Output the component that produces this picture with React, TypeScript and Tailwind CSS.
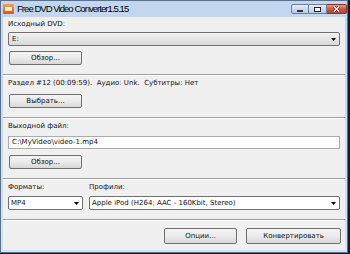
import React from "react";

const font = { fontFamily: "Tahoma, 'DejaVu Sans', 'Liberation Sans', sans-serif" };

function Btn({ children, className = "" }: { children: React.ReactNode; className?: string }) {
  return (
    <div
      className={
        "flex items-center justify-center rounded-[2px] border border-[#707070] bg-gradient-to-b from-[#f4f4f4] via-[#ebebeb] to-[#d8d8d8] text-[7px] text-[#111] " +
        className
      }
    >
      {children}
    </div>
  );
}

function Arrow() {
  return (
    <svg width="5" height="3" viewBox="0 0 5 3" className="shrink-0">
      <path d="M0 0H5L2.5 3Z" fill="#000" />
    </svg>
  );
}

function Sep() {
  return (
    <div className="w-full">
      <div className="h-px bg-[#a0a0a0]" />
      <div className="h-px bg-white" />
    </div>
  );
}

export default function App() {
  return (
    <div className="relative h-[254px] w-[350px] overflow-hidden bg-[#0f1b33]" style={font}>
      <div className="absolute left-0 top-0 flex h-[253px] w-[348px] flex-col border border-[#5b6f8f] bg-gradient-to-b from-[#c2d6ef] to-[#d3e2f5]">
        {/* title bar */}
        <div className="flex h-[16px] shrink-0 items-center pl-[2px]">
          <div className="flex h-[10px] w-[11px] items-center justify-center rounded-[1px] bg-gradient-to-b from-[#f6a34a] to-[#d8520f]">
            <div className="h-[4px] w-[7px] rounded-[1px] bg-[#fff1d0]" />
          </div>
          <div
            className="ml-[3px] text-[9.5px] leading-none tracking-[-0.95px] text-black"
            style={{ fontFamily: "'Liberation Sans', Arial, sans-serif" }}
          >
            Free DVD Video Converter1.5.15
          </div>
          <div className="ml-auto flex items-start self-start pt-[3px]">
            <div className="flex h-[10px] w-[18px] items-end justify-center rounded-l-[2px] border border-[#6b7f9c] bg-gradient-to-b from-[#e6eef9] to-[#b4c9e5] pb-[1px]">
              <div className="h-[2px] w-[6px] border border-[#333] bg-white" />
            </div>
            <div className="flex h-[10px] w-[18px] items-center justify-center border-y border-r border-[#6b7f9c] bg-gradient-to-b from-[#e6eef9] to-[#b4c9e5]">
              <div className="h-[5px] w-[7px] border-[1.5px] border-[#222] bg-white" />
            </div>
            <div className="flex h-[10px] w-[20px] items-center justify-center rounded-r-[2px] border-y border-r border-[#7a3a30] bg-gradient-to-b from-[#e8998a] via-[#d0543f] to-[#c0402c]">
              <svg width="7" height="6" viewBox="0 0 7 6">
                <path d="M1 0.5L6 5.5M6 0.5L1 5.5" stroke="#5a1a10" strokeWidth="2.4" />
                <path d="M1 0.5L6 5.5M6 0.5L1 5.5" stroke="#fff" strokeWidth="1.3" />
              </svg>
            </div>
          </div>
        </div>
        {/* client area */}
        <div className="mx-[2px] mb-[2px] flex flex-1 flex-col bg-[#f0f0f0] text-[7px] leading-none text-[#111]">
          <div className="flex flex-col px-[5px] pt-[4px]">
            <div className="h-[8px]">Исходный DVD:</div>
            <div className="mt-[3px] flex h-[14px] items-center justify-between rounded-[2px] border border-[#707070] bg-gradient-to-b from-[#f2f2f2] to-[#d8d8d8] pl-[3px] pr-[3px]">
              <span>E:</span>
              <Arrow />
            </div>
            <Btn className="ml-[1px] mt-[5px] h-[14px] w-[73px]">Обзор...</Btn>
          </div>
          <div className="mt-[9px]"><Sep /></div>
          <div className="flex flex-col px-[5px] pt-[4px]">
            <div className="h-[8px] whitespace-pre">Раздел #12 (00:09:59).  Аудио: Unk.  Субтитры: Нет</div>
            <Btn className="ml-[1px] mt-[6px] h-[14px] w-[73px]">Выбрать...</Btn>
          </div>
          <div className="mt-[9px]"><Sep /></div>
          <div className="flex flex-col px-[5px] pt-[4px]">
            <div className="h-[8px]">Выходной файл:</div>
            <div className="mt-[5px] flex h-[13px] items-center border border-[#ababab] bg-white pl-[3px]">
              C:\MyVideo\video-1.mp4
            </div>
            <Btn className="ml-[1px] mt-[6px] h-[14px] w-[73px]">Обзор...</Btn>
          </div>
          <div className="mt-[9px]"><Sep /></div>
          <div className="flex gap-[6px] px-[5px] pt-[4px]">
            <div className="flex w-[75px] flex-col">
              <div className="h-[8px]">Форматы:</div>
              <div className="mt-[4px] flex h-[14px] items-center justify-between rounded-[2px] border border-[#707070] bg-white pl-[2px] pr-[3px]">
                <span>MP4</span>
                <Arrow />
              </div>
            </div>
            <div className="flex flex-1 flex-col">
              <div className="h-[8px]">Профили:</div>
              <div className="mt-[4px] flex h-[14px] items-center justify-between rounded-[2px] border border-[#707070] bg-white pl-[2px] pr-[3px]">
                <span>Apple iPod (H264; AAC - 160Kbit, Stereo)</span>
                <Arrow />
              </div>
            </div>
          </div>
          <div className="mt-[9px]"><Sep /></div>
          <div className="flex justify-end gap-[9px] px-[4px] pt-[7px]">
            <Btn className="h-[16px] w-[73px]">Опции...</Btn>
            <Btn className="h-[16px] w-[95px]">Конвертировать</Btn>
          </div>
        </div>
      </div>
    </div>
  );
}
